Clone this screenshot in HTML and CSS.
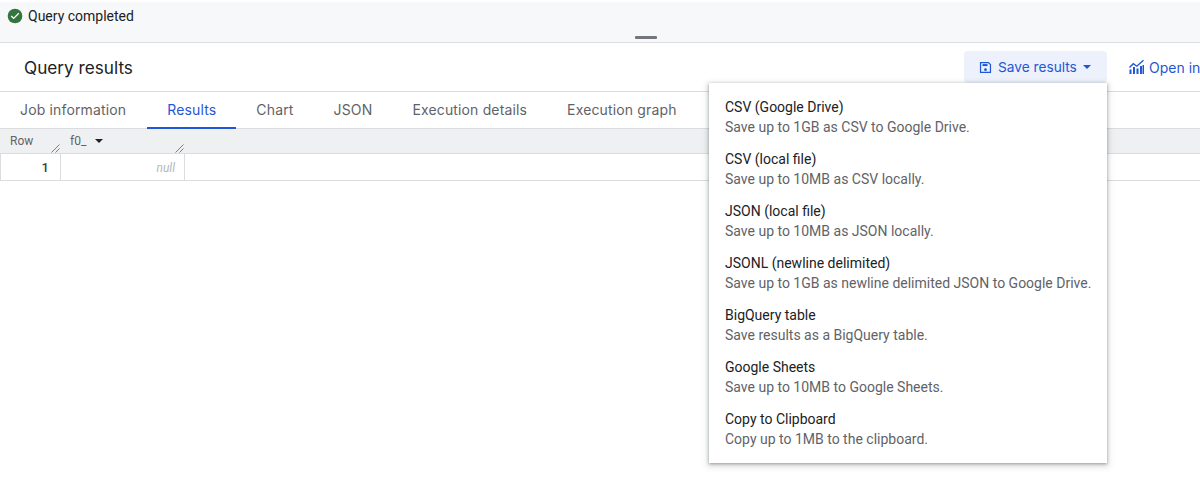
FILE: index.html
```html
<!DOCTYPE html>
<html lang="en">

<head>
  <title>Query results</title>
  <meta charset="utf-8">
  <link rel="stylesheet" href="styles.css">
</head>

<body>
  <div class="status-bar">
    <div class="status">
      <svg class="status-icon" viewBox="0 0 24 24" width="16" height="16">
        <path fill="#34753f" d="M12 1a11 11 0 1 0 0 22 11 11 0 0 0 0-22z"/>
        <path fill="#fff" d="M10 17l-4.400-4.400 1.400-1.400 3 3 7-7 1.400 1.400z"/>
      </svg>
      <span>Query completed</span>
    </div>
    <div class="drag-handle"></div>
  </div>

  <div class="results-header">
    <h1>Query results</h1>
    <div class="actions">
      <button class="save-button">
        <svg viewBox="0 0 14 14" width="13" height="13">
          <path fill="none" stroke="#1f57d6" stroke-width="1.300" d="M1.650 1.650h8.500l2.200 2.200v8.500h-10.700z"/>
          <path fill="#1f57d6" d="M3.800 3.300h5.400v2.200H3.800z"/>
          <circle fill="#1f57d6" cx="7" cy="9.300" r="1.500"/>
        </svg>
        <span>Save results</span>
        <span class="caret"></span>
      </button>
      <button class="open-button">
        <svg viewBox="0.500 0 16 16" width="16" height="16">
          <path fill="#1f57d6" d="M1 15v-4.500h2V15zM4.500 15V8h2v7zM8 15V9.500h2V15zM11.500 15V7h2v8zM14 15V6h1.500v9z"/>
          <path fill="none" stroke="#1f57d6" stroke-width="1.400" d="M1 8.500l3.800-3.800 3.500 2.500 6.700-6"/>
        </svg>
        <span>Open in</span>
      </button>
    </div>
  </div>

  <div class="tabs">
    <div class="tab first">Job information</div>
    <div class="tab active">Results</div>
    <div class="tab">Chart</div>
    <div class="tab">JSON</div>
    <div class="tab">Execution details</div>
    <div class="tab">Execution graph</div>
  </div>

  <div class="grid-head">
    <div class="col col-row">Row
      <svg class="resizer" viewBox="0 0 9 9" width="9" height="9"><path d="M0.500 8.500l8-8M4.500 8.500l4-4"/></svg>
    </div>
    <div class="col col-f0">f0_<span class="caret dark"></span>
      <svg class="resizer" viewBox="0 0 9 9" width="9" height="9"><path d="M0.500 8.500l8-8M4.500 8.500l4-4"/></svg>
    </div>
  </div>
  <div class="grid-row">
    <div class="cell col-row">1</div>
    <div class="cell col-f0 null">null</div>
  </div>

  <div class="save-menu">
    <div class="menu-item">
      <div class="menu-title">CSV (Google Drive)</div>
      <div class="menu-desc">Save up to 1GB as CSV to Google Drive.</div>
    </div>
    <div class="menu-item">
      <div class="menu-title">CSV (local file)</div>
      <div class="menu-desc">Save up to 10MB as CSV locally.</div>
    </div>
    <div class="menu-item">
      <div class="menu-title">JSON (local file)</div>
      <div class="menu-desc">Save up to 10MB as JSON locally.</div>
    </div>
    <div class="menu-item">
      <div class="menu-title">JSONL (newline delimited)</div>
      <div class="menu-desc">Save up to 1GB as newline delimited JSON to Google Drive.</div>
    </div>
    <div class="menu-item">
      <div class="menu-title">BigQuery table</div>
      <div class="menu-desc">Save results as a BigQuery table.</div>
    </div>
    <div class="menu-item">
      <div class="menu-title">Google Sheets</div>
      <div class="menu-desc">Save up to 10MB to Google Sheets.</div>
    </div>
    <div class="menu-item">
      <div class="menu-title">Copy to Clipboard</div>
      <div class="menu-desc">Copy up to 1MB to the clipboard.</div>
    </div>
  </div>
</body>

</html>
```

FILE: styles.css
```css
:root {
  --blue: #1f57d6;
  --border: #dadce0;
  --text: #202124;
  --muted: #5f6368;
}

html,
body {
  height: 100%;
}

body {
  margin: 0;
  background: #fff;
  color: var(--text);
  font-family: Roboto, sans-serif;
  font-size: 14px;
  overflow: hidden;
  position: relative;
}

.status-bar {
  height: 40px;
  margin-top: 2px;
  background: #f7f8fa;
  border-bottom: 1px solid var(--border);
  position: relative;
}

.status {
  display: flex;
  align-items: center;
  gap: 5px;
  padding: 6px 0 0 7px;
  line-height: 16px;
}

.status-icon {
  flex: none;
}

.drag-handle {
  position: absolute;
  left: 635px;
  top: 34px;
  width: 22px;
  height: 3px;
  background: #73777c;
  border-radius: 1px;
}

.results-header {
  height: 48px;
  display: flex;
  align-items: center;
  border-bottom: 1px solid var(--border);
  padding-left: 24px;
}

.results-header h1 {
  flex: none;
  width: 940px;
  margin: 0;
  font-family: Inter, sans-serif;
  font-size: 17.200px;
  font-weight: 400;
}

.actions {
  flex: none;
  display: flex;
  align-items: center;
  gap: 14px;
}

.actions button {
  display: flex;
  align-items: center;
  height: 32px;
  border: none;
  background: none;
  color: var(--blue);
  font-family: Inter, sans-serif;
  font-size: 14px;
  padding: 0;
  white-space: nowrap;
}

.actions .save-button {
  width: 143px;
  padding-left: 15px;
  gap: 6px;
  background: #ecf1fb;
  border-radius: 4px;
  font-size: 13.700px;
}

.actions .open-button {
  gap: 4px;
  padding-left: 8px;
}

.caret {
  display: inline-block;
  width: 0;
  height: 0;
  border-left: 4.500px solid transparent;
  border-right: 4.500px solid transparent;
  border-top: 4.500px solid var(--blue);
}

.caret.dark {
  border-top-color: #202124;
  margin-left: 9px;
}

.tabs {
  height: 36px;
  display: flex;
  border-bottom: 1px solid var(--border);
}

.tab {
  padding: 0 20px;
  line-height: 36px;
  font-family: Inter, sans-serif;
  font-size: 14px;
  letter-spacing: 0.150px;
  color: var(--muted);
  white-space: nowrap;
}

.tab.first {
  padding-right: 21px;
}

.tab.active {
  color: var(--blue);
  box-shadow: inset 0 -2px 0 var(--blue);
  margin-bottom: -1px;
}

.grid-head {
  height: 24px;
  display: flex;
  background: #eff0f2;
  border-bottom: 1px solid var(--border);
  font-size: 12px;
  color: var(--muted);
}

.col {
  position: relative;
  display: flex;
  align-items: center;
  padding-left: 10px;
  box-sizing: border-box;
}

.col-row {
  width: 61px;
}

.col-f0 {
  width: 124px;
  padding-left: 9px;
}

.resizer {
  position: absolute;
  right: 1px;
  bottom: 0;
  fill: none;
  stroke: #7b7f84;
  stroke-width: 1;
}

.grid-row {
  height: 26px;
  display: flex;
  border-bottom: 1px solid var(--border);
  font-size: 12px;
}

.cell {
  box-sizing: border-box;
  border-right: 1px solid var(--border);
  text-align: right;
  padding-right: 10px;
  line-height: 28px;
  color: #3c4043;
}

.grid-row .col-row {
  border-left: 1px solid var(--border);
  padding-right: 11px;
  font-size: 13px;
  font-weight: 500;
}

.null {
  color: #b5b8bc;
  font-style: italic;
  padding-right: 9px;
}

.save-menu {
  position: absolute;
  left: 709px;
  top: 83px;
  width: 398px;
  height: 380px;
  padding: 8px 0;
  box-sizing: border-box;
  background: #fff;
  box-shadow: 0 1px 3px rgba(60, 64, 67, 0.45), 0 2px 6px 2px rgba(60, 64, 67, 0.15);
}

.menu-item {
  height: 52px;
  box-sizing: border-box;
  padding: 6px 16px 0;
  line-height: 20px;
  white-space: nowrap;
}

.menu-title {
  color: var(--text);
}

.menu-desc {
  color: var(--muted);
}
```
